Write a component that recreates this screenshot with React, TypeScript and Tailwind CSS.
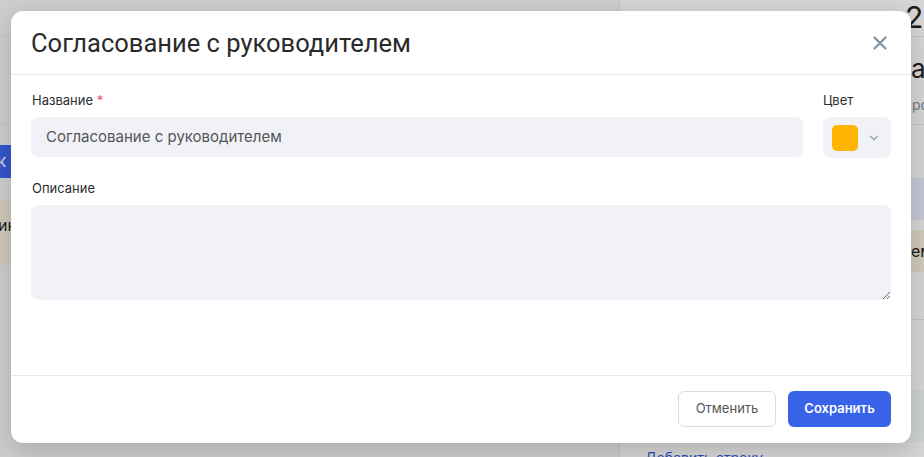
import { X, ChevronDown } from "lucide-react";

const BackgroundPage = () => {
  return (
    <div className="w-[924px] h-[457px] grid grid-cols-[620px_1fr] bg-white font-['Inter',sans-serif]">
      <div className="flex flex-col bg-[#f5f6f8] border-r border-[#e6e8ee]">
        <div className="h-[37px] border-b border-[#e4e7f0]" />
        <div className="h-[88px] border-b border-[#e4e7f0]" />
        <div className="h-[20px]" />
        <div className="h-[33px] w-[120px] -ml-[10px] bg-[#4066f2] rounded-md flex items-center pl-[7px] text-white text-[17px]">
          к
        </div>
        <div className="h-[22px]" />
        <div className="h-[65px] bg-[#f8f1df] flex items-start pt-[13px] -ml-[2px] text-[16px] text-[#222]">
          ин
        </div>
      </div>
      <div className="flex flex-col bg-white">
        <div className="h-[37px] border-b border-[#e4e7f0] pl-[285px] text-[30px] leading-[34px] text-[#222] whitespace-nowrap">
          24
        </div>
        <div className="h-[88px] border-b border-[#e4e7f0] flex flex-col pt-[16px] pl-[291px] whitespace-nowrap">
          <div className="text-[26px] leading-[32px] text-[#222]">ача</div>
          <div className="text-[14px] leading-[20px] text-[#8a8f99] mt-[10px] pl-[1px]">роект</div>
        </div>
        <div className="h-[53px]" />
        <div className="h-[42px] bg-[#eceeff]" />
        <div className="h-[10px]" />
        <div className="h-[42px] bg-[#f8f1df] flex items-center pl-[291px] text-[16px] text-[#222] whitespace-nowrap">
          ем
        </div>
        <div className="h-[48px] border-b border-[#e4e7f0]" />
        <div className="h-[70px]" />
        <div className="h-[52px] bg-[#f5fbfa]" />
        <div className="pl-[25px] pt-[5px] text-[14px] text-[#3a5bd9] underline whitespace-nowrap">
          Добавить строку
        </div>
      </div>
    </div>
  );
};

const Modal = () => {
  return (
    <div className="w-[900px] bg-white rounded-[12px] shadow-[0_8px_28px_rgba(0,0,0,0.18)] flex flex-col font-['Inter',sans-serif]">
      <div className="h-[64px] border-b border-[#e8e9ee] flex items-center justify-between pl-[20px] pr-[20px]">
        <div className="text-[25.5px] text-[#2a2a2a] font-['Roboto',sans-serif] leading-[30px]">
          Согласование с руководителем
        </div>
        <X size={22} strokeWidth={2.6} className="text-[#8593a8]" />
      </div>
      <div className="flex flex-col px-[20px] pt-[17px] pb-[75px]">
        <div className="flex flex-row gap-[20px]">
          <div className="flex-1 flex flex-col">
            <div className="text-[13px] leading-[16px] text-[#2e2e2e] mb-[9px] pl-[1px]">
              Название <span className="text-[#f0506e]">*</span>
            </div>
            <div className="h-[40px] bg-[#f1f2f7] rounded-[8px] flex items-center px-[15px] text-[15px] text-[#555]">
              Согласование с руководителем
            </div>
          </div>
          <div className="w-[68px] flex flex-col">
            <div className="text-[13px] leading-[16px] text-[#2e2e2e] mb-[9px]">Цвет</div>
            <div className="h-[41px] bg-[#f1f2f7] rounded-[8px] flex items-center pl-[9px] pr-[10px] justify-between">
              <div className="w-[26px] h-[26px] rounded-[5px] bg-[#ffb400]" />
              <ChevronDown size={14} strokeWidth={2.5} className="text-[#9ca5b7]" />
            </div>
          </div>
        </div>
        <div className="text-[13px] leading-[16px] text-[#2e2e2e] mt-[22px] mb-[9px] pl-[1px]">
          Описание
        </div>
        <textarea className="h-[95px] bg-[#f1f2f7] rounded-[8px] resize-y outline-none px-[15px] py-[10px] text-[15px]" />
      </div>
      <div className="border-t border-[#e8e9ee] flex flex-row justify-end gap-[12px] px-[20px] pt-[15px] pb-[16px]">
        <button className="h-[36px] w-[98px] rounded-[6px] border border-[#d9dce3] bg-white text-[13px] text-[#555]">
          Отменить
        </button>
        <button className="h-[36px] w-[103px] rounded-[6px] bg-[#3862e8] text-[13px] text-white font-semibold">
          Сохранить
        </button>
      </div>
    </div>
  );
};

const App = () => {
  return (
    <div className="relative w-[924px] h-[457px] overflow-hidden">
      <BackgroundPage />
      <div className="absolute inset-0 bg-black/[0.16] flex items-start pl-[11px] pt-[11px]">
        <Modal />
      </div>
    </div>
  );
};

export default App;
